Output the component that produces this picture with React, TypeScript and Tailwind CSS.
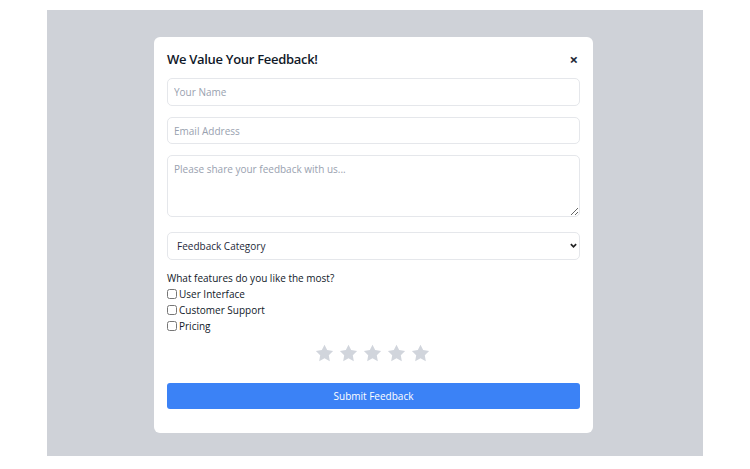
import { useState } from "react";

const Star = () => (
  <svg width="19" height="18" viewBox="0 0 24 23" className="text-gray-300" fill="currentColor">
    <path d="M12 0.8l3.4 7 7.6 1.1-5.5 5.4 1.3 7.6L12 18.3l-6.8 3.6 1.3-7.6L1 8.9l7.6-1.1z" />
  </svg>
);

const App = () => {
  const [rating] = useState(0);

  return (
    <div className="min-h-screen bg-white pt-[10px] flex justify-center font-['Open_Sans',sans-serif]">
      <div className="w-[656px] h-[446px] bg-[#cfd2d8] pl-[107px] pt-[27px]">
        <div className="w-[439px] h-[396px] bg-white rounded-[6px] px-[13px] pt-[12px]">
          <div className="flex items-center justify-between h-[22px]">
            <h2 className="text-[13px] font-semibold tracking-[-0.3px] text-gray-900">We Value Your Feedback!</h2>
            <button className="text-[15px] font-bold text-gray-800 leading-none mr-[2px] -mt-[1px]">×</button>
          </div>
          <form className="mt-[7px]">
            <input
              type="text"
              placeholder="Your Name"
              className="block w-full h-[28px] border border-gray-200 rounded-[5px] px-[6px] text-[10px] placeholder:text-gray-400 outline-none"
            />
            <input
              type="email"
              placeholder="Email Address"
              className="block w-full h-[27px] mt-[11px] border border-gray-200 rounded-[5px] px-[6px] text-[10px] placeholder:text-gray-400 outline-none"
            />
            <textarea
              placeholder="Please share your feedback with us..."
              className="block w-full h-[62px] mt-[11px] border border-gray-200 rounded-[5px] px-[6px] py-[6px] text-[10px] placeholder:text-gray-400 outline-none"
            />
            <div className="relative mt-[15px]">
              <select className="block w-full h-[28px] appearance-none border border-gray-200 rounded-[5px] px-[9px] text-[10px] text-gray-800 bg-white outline-none">
                <option>Feedback Category</option>
                <option>Bug Report</option>
                <option>Feature Request</option>
                <option>General</option>
              </select>
              <svg
                className="absolute right-[3px] top-[10px] pointer-events-none"
                width="7"
                height="7"
                viewBox="0 0 8 8"
                fill="none"
                stroke="#222"
                strokeWidth="2"
              >
                <path d="M1 2.5l3 3 3-3" />
              </svg>
            </div>
            <p className="mt-[10px] text-[10px] leading-[16px] text-gray-900">What features do you like the most?</p>
            {["User Interface", "Customer Support", "Pricing"].map((label) => (
              <label key={label} className="flex items-center h-[16px] text-[10px] text-gray-900">
                <input type="checkbox" className="w-[10px] h-[10px] m-0 mr-[2px]" />
                {label}
              </label>
            ))}
            <div className="flex justify-center gap-[5px] mt-[10px] h-[18px] pr-[2px]" data-rating={rating}>
              {[1, 2, 3, 4, 5].map((n) => (
                <Star key={n} />
              ))}
            </div>
            <button
              type="button"
              className="block w-full h-[26px] mt-[21px] bg-[#3b82f6] text-white text-[10px] rounded-[3px]"
            >
              Submit Feedback
            </button>
          </form>
        </div>
      </div>
    </div>
  );
};

export default App;
